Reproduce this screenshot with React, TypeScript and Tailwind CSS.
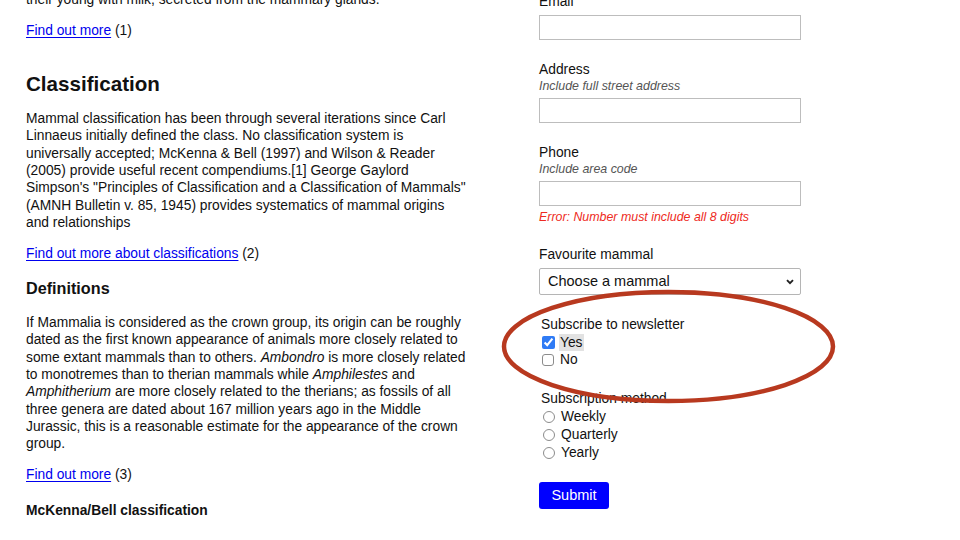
import React from "react";

const linkCls = "text-[#0000ee] underline underline-offset-[2px]";

function Field({
  label,
  hint,
  error,
  first,
}: {
  label: string;
  hint?: string;
  error?: string;
  first?: boolean;
}) {
  return (
    <div className={first ? "" : "mt-[21px]"}>
      <div className="leading-[17px]">{label}</div>
      {hint && <div className="text-[12.4px] leading-[17px] italic text-[#555]">{hint}</div>}
      <div
        className={`${hint ? "mt-[3px]" : "mt-[5px]"} h-[25px] w-[262px] border border-[#bdbdbd] bg-white`}
      />
      {error && (
        <div className="mt-[3px] text-[12.4px] leading-[17px] italic text-[#ee2a22]">{error}</div>
      )}
    </div>
  );
}

export default function App() {
  return (
    <div className="relative h-[540px] w-[960px] overflow-hidden bg-white font-['Liberation_Sans',Arial,sans-serif] text-[13.8px] text-[#111]">
      <div className="flex">
        {/* ── Article ── */}
        <div className="-mt-[9px] w-[471px] shrink-0 pl-[26px] leading-[17.33px]">
          <p>their young with milk, secreted from the mammary glands.</p>
          <p className="mt-[14px]">
            <a href="#" className={linkCls}>Find out more</a> (1)
          </p>

          <h2 className="mt-[31px] text-[20.6px] font-bold leading-[26px]">Classification</h2>
          <p className="mt-[13.5px] whitespace-nowrap">
            Mammal classification has been through several iterations since Carl
            <br />
            Linnaeus initially defined the class. No classification system is
            <br />
            universally accepted; McKenna &amp; Bell (1997) and Wilson &amp; Reader
            <br />
            (2005) provide useful recent compendiums.[1] George Gaylord
            <br />
            Simpson's "Principles of Classification and a Classification of Mammals"
            <br />
            (AMNH Bulletin v. 85, 1945) provides systematics of mammal origins
            <br />
            and relationships
          </p>
          <p className="mt-[13.7px]">
            <a href="#" className={linkCls}>Find out more about classifications</a> (2)
          </p>

          <h3 className="mt-[16px] text-[16.2px] font-bold leading-[20px]">Definitions</h3>
          <p className="mt-[15.7px] whitespace-nowrap">
            If Mammalia is considered as the crown group, its origin can be roughly
            <br />
            dated as the first known appearance of animals more closely related to
            <br />
            some extant mammals than to others. <i>Ambondro</i> is more closely related
            <br />
            to monotremes than to therian mammals while <i>Amphilestes</i> and
            <br />
            <i>Amphitherium</i> are more closely related to the therians; as fossils of all
            <br />
            three genera are dated about 167 million years ago in the Middle
            <br />
            Jurassic, this is a reasonable estimate for the appearance of the crown
            <br />
            group.
          </p>
          <p className="mt-[13.5px]">
            <a href="#" className={linkCls}>Find out more</a> (3)
          </p>

          <h4 className="mt-[18.4px] font-bold">McKenna/Bell classification</h4>
        </div>

        {/* ── Form ── */}
        <div className="-mt-[7px] ml-[68px]">
          <Field label="Email" first />
          <Field label="Address" hint="Include full street address" />
          <Field
            label="Phone"
            hint="Include area code"
            error="Error: Number must include all 8 digits"
          />

          <div className="mt-[20px]">
            <div className="leading-[17px]">Favourite mammal</div>
            <div className="mt-[5px] flex h-[27px] w-[262px] items-center justify-between rounded-[2px] border border-[#b5b5b5] bg-white pl-[8px] pr-[6px] text-[14.5px]">
              <span>Choose a mammal</span>
              <svg width="8" height="6" viewBox="0 0 8 6">
                <polyline points="1,1.2 4,4.2 7,1.2" fill="none" stroke="#222" strokeWidth="1.9" />
              </svg>
            </div>
          </div>

          <fieldset className="mt-[21px] pl-[2px]">
            <div className="leading-[17px]">Subscribe to newsletter</div>
            <label className="flex h-[18px] items-center">
              <input type="checkbox" defaultChecked className="ml-[1px] h-[13px] w-[13px] accent-[#2f7bf5]" />
              <span className="ml-[4px] bg-[#e2e2e2] px-[1px] leading-[17px]">Yes</span>
            </label>
            <label className="flex h-[18px] items-center">
              <input
                type="checkbox"
                className="ml-[1px] h-[12px] w-[12px] appearance-none rounded-[3px] border border-[#8c8c8c] bg-white"
              />
              <span className="ml-[6px]">No</span>
            </label>
          </fieldset>

          <fieldset className="mt-[20.5px] pl-[2px]">
            <div className="leading-[17px]">Subscription method</div>
            <div className="mt-[1.5px]">
              {["Weekly", "Quarterly", "Yearly"].map((m) => (
                <label key={m} className="flex h-[18px] items-center">
                  <input
                    type="radio"
                    name="method"
                    className="ml-[2px] h-[12px] w-[12px] appearance-none rounded-full border border-[#8c8c8c] bg-white"
                  />
                  <span className="ml-[6px]">{m}</span>
                </label>
              ))}
            </div>
          </fieldset>

          <button className="mt-[20px] h-[27px] w-[70px] rounded-[3px] bg-[#0000ff] text-[14.5px] text-white">
            Submit
          </button>
        </div>
      </div>

      {/* annotation ring */}
      <svg className="pointer-events-none absolute left-0 top-0" width="960" height="540">
        <ellipse cx="668.5" cy="346.5" rx="164.5" ry="54.5" fill="none" stroke="#b8391f" strokeWidth="4.5" />
      </svg>
    </div>
  );
}
